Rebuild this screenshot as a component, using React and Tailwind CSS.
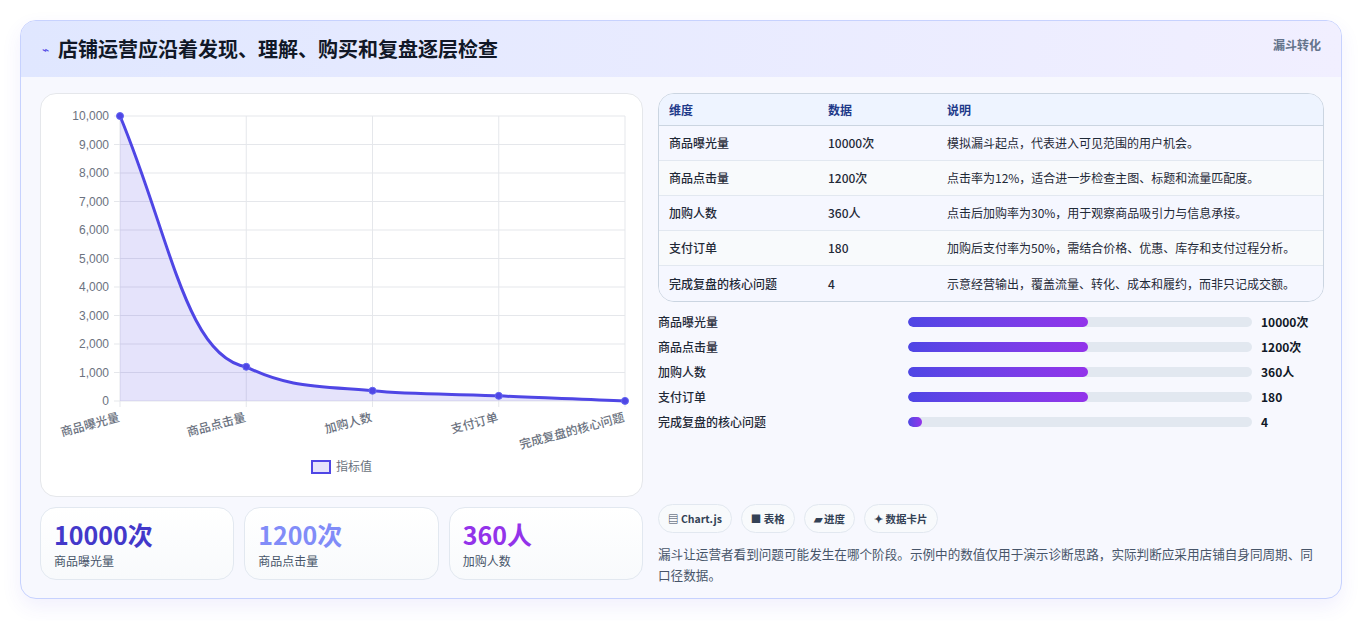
import React from 'react';

const FONT = { fontFamily: '"Noto Sans CJK SC", "Noto Sans", sans-serif' };

const ROWS = [
  ['商品曝光量', '10000次', '模拟漏斗起点，代表进入可见范围的用户机会。', 52],
  ['商品点击量', '1200次', '点击率为12%，适合进一步检查主图、标题和流量匹配度。', 52],
  ['加购人数', '360人', '点击后加购率为30%，用于观察商品吸引力与信息承接。', 52],
  ['支付订单', '180', '加购后支付率为50%，需结合价格、优惠、库存和支付过程分析。', 52],
  ['完成复盘的核心问题', '4', '示意经营输出，覆盖流量、转化、成本和履约，而非只记成交额。', 4],
];

// chart geometry, in chart card coordinates
const X0 = 79, X1 = 584, Y0 = 22, Y1 = 307;
const xs = [0, 1, 2, 3, 4].map((i) => X0 + (i * (X1 - X0)) / 4);
const yv = (v) => Y1 - (v / 10000) * (Y1 - Y0);
const VALUES = [10000, 1200, 360, 180, 4];
const LABELS = ['商品曝光量', '商品点击量', '加购人数', '支付订单', '完成复盘的核心问题'];

function FunnelChart() {
  const pts = VALUES.map((v, i) => [xs[i], yv(v)]);
  const line = `M${pts[0][0]},${pts[0][1]} C${pts[0][0] + 50},${pts[0][1] + 120} ${pts[1][0] - 60},${pts[1][1] - 10} ${pts[1][0]},${pts[1][1]} C${pts[1][0] + 40},${pts[1][1] + 20} ${pts[2][0] - 60},${pts[2][1] - 5} ${pts[2][0]},${pts[2][1]} C${pts[2][0] + 40},${pts[2][1] + 4} ${pts[3][0] - 40},${pts[3][1] - 2} ${pts[3][0]},${pts[3][1]} C${pts[3][0] + 40},${pts[3][1] + 2} ${pts[4][0] - 40},${pts[4][1] - 2} ${pts[4][0]},${pts[4][1]}`;
  return (
    <svg width="602" height="403" className="block">
      {Array.from({ length: 11 }).map((_, i) => {
        const y = Y0 + (i * (Y1 - Y0)) / 10;
        return (
          <g key={i}>
            <line x1={X0 - 6} x2={X1} y1={y} y2={y} stroke="#e5e7eb" />
            <text x={X0 - 11} y={y + 4} textAnchor="end" fontSize="12" fill="#6b7280" fontFamily="Liberation Sans, sans-serif">
              {(10000 - i * 1000).toLocaleString('en-US')}
            </text>
          </g>
        );
      })}
      {xs.map((x, i) => (
        <line key={i} x1={x} x2={x} y1={Y0} y2={Y1 + 6} stroke="#e5e7eb" />
      ))}
      <path d={`${line} L${X1},${Y1} L${X0},${Y1} Z`} fill="rgba(79,70,229,0.15)" />
      <path d={line} fill="none" stroke="#4f46e5" strokeWidth="3" />
      {pts.map(([x, y], i) => (
        <circle key={i} cx={x} cy={y} r="3.5" fill="#4f46e5" stroke="#6366f1" strokeWidth="1" />
      ))}
      {LABELS.map((l, i) => (
        <text key={i} x={xs[i]} y={Y1 + 20} textAnchor="end" fontSize="12" fontWeight="500" fill="#6b7280" transform={`rotate(-15 ${xs[i]} ${Y1 + 20})`} style={FONT}>
          {l}
        </text>
      ))}
      <rect x="271" y="367" width="18" height="12" fill="rgba(79,70,229,0.15)" stroke="#4f46e5" strokeWidth="2" />
      <text x="295" y="377" fontSize="12" fill="#6b7280" style={FONT}>指标值</text>
    </svg>
  );
}

function Stat({ value, label, color }) {
  return (
    <div className="flex-1 h-[73px] rounded-2xl border border-[#e2e8f0] bg-gradient-to-b from-white to-[#f8fafc] px-[13px] pt-[9px]">
      <div className={`text-[25px] font-bold leading-[34px] ${color}`}>{value}</div>
      <div className="text-[12px] text-[#475569] mt-[1px]">{label}</div>
    </div>
  );
}

export default function App() {
  return (
    <div className="w-[1363px] h-[621px] bg-white pt-[20px] px-[20px]" style={FONT}>
      <div className="w-[1322px] h-[579px] rounded-2xl border border-[#c7d2fe] bg-[#f7f8fe] overflow-hidden shadow-[0_8px_20px_rgba(79,70,229,0.08)]">
        <div className="h-[56px] bg-gradient-to-r from-[#e0e7ff] to-[#f1efff] flex items-center justify-between pl-[21px] pr-[20px]">
          <div className="flex items-center gap-[9px]">
            <span className="text-[#4f46e5] text-[12px]">⌁</span>
            <span className="text-[20px] font-bold text-[#111827]">店铺运营应沿着发现、理解、购买和复盘逐层检查</span>
          </div>
          <span className="text-[12px] font-bold text-[#64748b] self-start mt-[15px]">漏斗转化</span>
        </div>
        <div className="flex gap-[15px] px-[19px] pt-[16px]">
          <div className="w-[603px] flex flex-col gap-[10px]">
            <div className="h-[404px] rounded-2xl border border-[#e5e7eb] bg-white overflow-hidden">
              <FunnelChart />
            </div>
            <div className="flex gap-[10px]">
              <Stat value="10000次" label="商品曝光量" color="text-[#4338ca]" />
              <Stat value="1200次" label="商品点击量" color="text-[#818cf8]" />
              <Stat value="360人" label="加购人数" color="text-[#9333ea]" />
            </div>
          </div>
          <div className="w-[666px] flex flex-col">
            <div className="rounded-2xl border border-[#cbd5e1] overflow-hidden text-[12px]">
              <div className="flex h-[32px] items-center bg-[#eef4ff] border-b border-[#cbd5e1] font-bold text-[#1e3a8a]">
                <div className="w-[169px] pl-[10px]">维度</div>
                <div className="w-[119px]">数据</div>
                <div>说明</div>
              </div>
              {ROWS.map((r, i) => (
                <div key={i} className={`flex h-[35px] items-center text-[#1f2937] ${i < 4 ? 'border-b border-[#e2e8f0]' : ''} ${i % 2 ? 'bg-[#f8fafc]' : 'bg-[#f5f7ff]'}`}>
                  <div className="w-[169px] pl-[10px] font-medium">{r[0]}</div>
                  <div className="w-[119px] font-medium">{r[1]}</div>
                  <div>{r[2]}</div>
                </div>
              ))}
            </div>
            <div className="flex flex-col gap-[9px] mt-[12px]">
              {ROWS.map((r, i) => (
                <div key={i} className="flex items-center h-[16px] text-[12px]">
                  <div className="w-[250px] font-medium text-[#1f2937]">{r[0]}</div>
                  <div className="w-[344px] h-[10px] rounded-full bg-[#e2e8f0] overflow-hidden">
                    <div className="h-full rounded-full bg-gradient-to-r from-[#4f46e5] to-[#9333ea]" style={{ width: i < 4 ? 180 : 14 }} />
                  </div>
                  <div className="ml-[9px] font-bold text-[#111827]">{r[1]}</div>
                </div>
              ))}
            </div>
            <div className="flex gap-[9px] mt-[74px]">
              {['▤ Chart.js', '■ 表格', '▰ 进度', '✦ 数据卡片'].map((c) => (
                <span key={c} className="h-[29px] px-[9px] flex items-center rounded-full border border-[#e2e8f0] bg-[#f8fafc] text-[10.5px] font-bold text-[#334155]">{c}</span>
              ))}
            </div>
            <p className="mt-[10px] text-[12.6px] leading-[21px] text-[#475569] w-[666px]">
              漏斗让运营者看到问题可能发生在哪个阶段。示例中的数值仅用于演示诊断思路，实际判断应采用店铺自身同周期、同口径数据。
            </p>
          </div>
        </div>
      </div>
    </div>
  );
}
